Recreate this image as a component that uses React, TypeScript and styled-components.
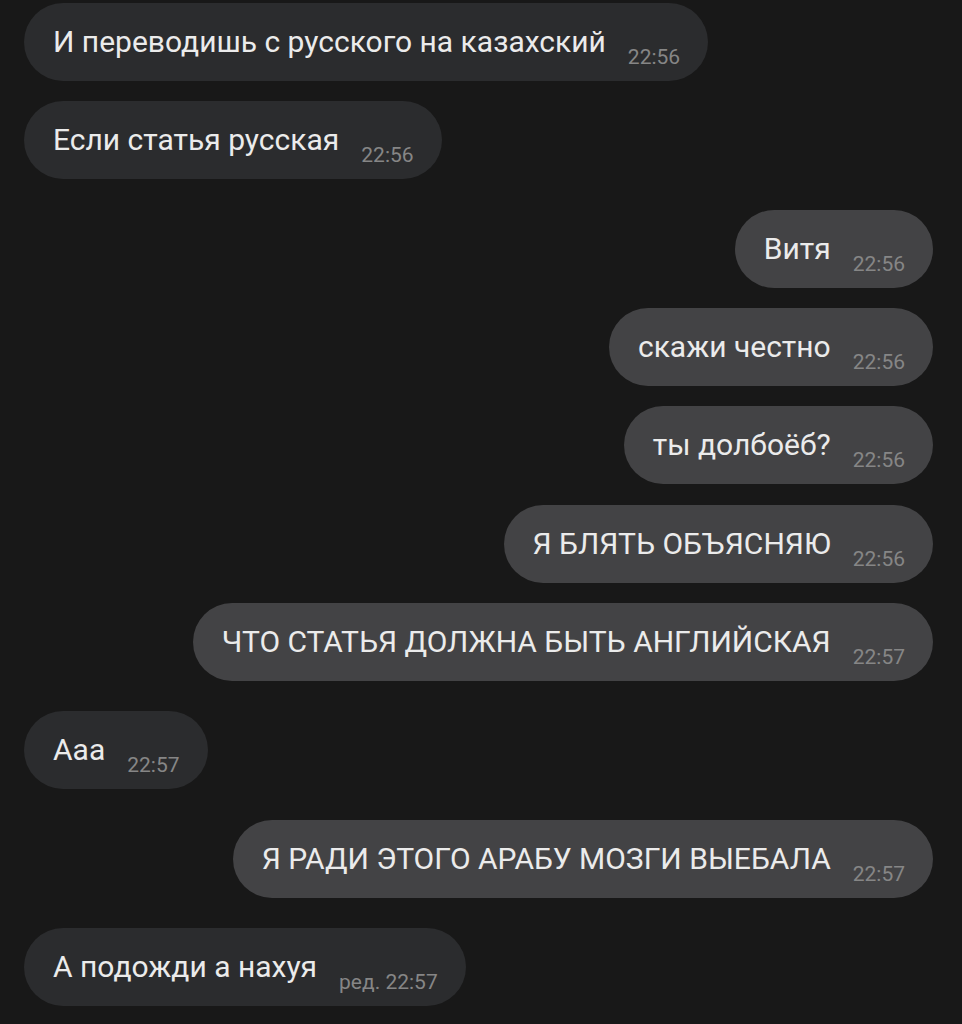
import React from "react";
import styled, { createGlobalStyle } from "styled-components";

const GlobalStyle = createGlobalStyle`
  html, body {
    margin: 0;
    padding: 0;
    background: #181818;
  }
  body {
    font-family: Roboto, "Noto Sans", "Liberation Sans", sans-serif;
  }
`;

const Chat = styled.div`
  min-height: 1024px;
  box-sizing: border-box;
  display: flex;
  flex-direction: column;
  padding: 3px 29px 0 24px;
  background: #181818;
`;

const Bubble = styled.div<{ $out?: boolean; $switch?: boolean }>`
  align-self: ${(p) => (p.$out ? "flex-end" : "flex-start")};
  margin-top: ${(p) => (p.$switch ? "30.5px" : "20.25px")};
  &:first-child {
    margin-top: 0;
  }
  height: 78px;
  box-sizing: border-box;
  display: flex;
  align-items: center;
  padding: 0 28px 0 29px;
  border-radius: 39px;
  background: ${(p) => (p.$out ? "#434345" : "#2b2c2e")};
`;

const Text = styled.span`
  font-size: 30px;
  line-height: 1;
  color: #ebebeb;
  white-space: nowrap;
`;

const Time = styled.span`
  align-self: flex-end;
  margin: 0 0 13px 22px;
  font-size: 21px;
  line-height: 1;
  color: #868686;
  white-space: nowrap;
`;

type Message = {
  text: string;
  time: string;
  out?: boolean;
};

const messages: Message[] = [
  { text: "И переводишь с русского на казахский", time: "22:56" },
  { text: "Если статья русская", time: "22:56" },
  { text: "Витя", time: "22:56", out: true },
  { text: "скажи честно", time: "22:56", out: true },
  { text: "ты долбоёб?", time: "22:56", out: true },
  { text: "Я БЛЯТЬ ОБЪЯСНЯЮ", time: "22:56", out: true },
  { text: "ЧТО СТАТЬЯ ДОЛЖНА БЫТЬ АНГЛИЙСКАЯ", time: "22:57", out: true },
  { text: "Ааа", time: "22:57" },
  { text: "Я РАДИ ЭТОГО АРАБУ МОЗГИ ВЫЕБАЛА", time: "22:57", out: true },
  { text: "А подожди а нахуя", time: "ред. 22:57" },
];

const App: React.FC = () => {
  return (
    <>
      <GlobalStyle />
      <Chat>
        {messages.map((m, i) => (
          <Bubble
            key={i}
            $out={m.out}
            $switch={i > 0 && !!messages[i - 1].out !== !!m.out}
          >
            <Text>{m.text}</Text>
            <Time>{m.time}</Time>
          </Bubble>
        ))}
      </Chat>
    </>
  );
};

export default App;
